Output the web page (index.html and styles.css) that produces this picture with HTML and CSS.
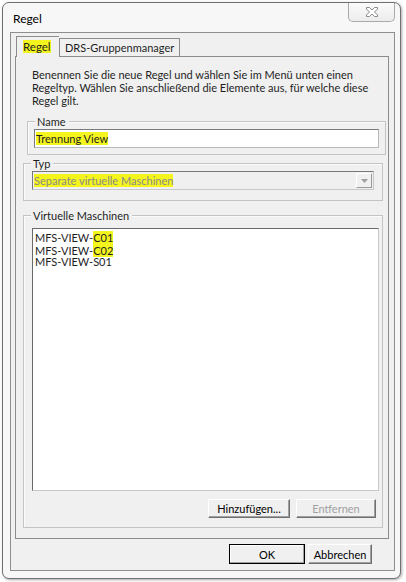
FILE: index.html
```html
<!DOCTYPE html>
<html>
<head>
<meta charset="utf-8">
<link rel="stylesheet" href="styles.css">
</head>
<body>
<div class="window">
  <div class="titlebar">
    <span class="title">Regel</span>
    <div class="close">
      <svg width="16" height="12" viewBox="0 0 16 12"><path d="M2.5 1.5h3l2.5 2.5 2.5-2.5h3v1.5l-3 3 3 3v1.5h-3l-2.5-2.5-2.5 2.5h-3v-1.5l3-3-3-3z" fill="#fff" stroke="#8a8a8a" stroke-width="1"/></svg>
    </div>
  </div>
  <div class="client">
    <div class="tabs">
      <div class="tab active"><span class="hl">Regel</span></div>
      <div class="tab">DRS-Gruppenmanager</div>
    </div>
    <div class="page">
      <p class="desc">Benennen Sie die neue Regel und wählen Sie im Menü unten einen Regeltyp. Wählen Sie anschließend die Elemente aus, für welche diese Regel gilt.</p>
      <div class="group g-name">
        <div class="legend">Name</div>
        <div class="textbox"><span class="hl">Trennung View</span></div>
      </div>
      <div class="group g-typ">
        <div class="legend">Typ</div>
        <div class="combo"><span class="hl">Separate virtuelle Maschinen</span><span class="drop"><svg width="7" height="4" viewBox="0 0 7 4"><path d="M0 0h7l-3.5 4z" fill="#a0a0a0"/></svg></span></div>
      </div>
      <div class="group g-vm">
        <div class="legend">Virtuelle Maschinen</div>
        <div class="list">
          <div class="item">MFS-VIEW-<span class="hl">C01</span></div>
          <div class="item">MFS-VIEW-<span class="hl">C02</span></div>
          <div class="item">MFS-VIEW-S01</div>
        </div>
        <div class="btnrow">
          <button class="btn add">Hinzufügen...</button>
          <button class="btn remove disabled">Entfernen</button>
        </div>
      </div>
    </div>
    <div class="footer">
      <button class="btn ok">OK</button>
      <button class="btn cancel">Abbrechen</button>
    </div>
  </div>
</div>
</body>
</html>
```

FILE: styles.css
```css
html, body {
  margin: 0;
  padding: 0;
  background: #ffffff;
}
body {
  width: 406px;
  height: 582px;
  font-family: "Lato", "Noto Sans", sans-serif;
  font-size: 11px;
  color: #1e1e1e;
}
.window {
  margin: 2px 0 0 2px;
  width: 399px;
  height: 577px;
  box-sizing: border-box;
  border: 1px solid #707070;
  border-radius: 7px;
  background: #f7f7f7;
  padding: 0 5px 7px 7px;
  display: flex;
  flex-direction: column;
  box-shadow: 1px 1px 3px rgba(0,0,0,0.35);
}
.titlebar {
  height: 29px;
  flex: none;
  display: flex;
  align-items: flex-start;
  justify-content: space-between;
}
.title {
  margin: 8px 0 0 3px;
  font-size: 12px;
  color: #000;
}
.close {
  width: 47px;
  height: 19px;
  box-sizing: border-box;
  border: 1px solid #a9a9a9;
  border-top: none;
  border-radius: 0 0 5px 5px;
  background: linear-gradient(#fbfbfb, #ececec);
  display: flex;
  align-items: center;
  justify-content: center;
}
.client {
  flex: 1;
  border: 1px solid #8e8e8e;
  background: #f0f0f0;
  display: flex;
  flex-direction: column;
  padding: 0 5px 0 4px;
}
.tabs {
  display: flex;
  align-items: flex-end;
  height: 23px;
  flex: none;
  padding-left: 1px;
  position: relative;
  z-index: 1;
}
.tab {
  height: 18px;
  box-sizing: border-box;
  padding: 0 5px 0 5px;
  border: 1px solid #8c8c8c;
  border-bottom: none;
  background: #f0f0f0;
  line-height: 17px;
}
.tab.active {
  height: 21px;
  width: 43px;
  padding: 2px 0 0 6px;
  margin-bottom: -1px;
  line-height: 15px;
  border-right: none;
  font-size: 11.5px;
}
.hl {
  background: #f5f51e;
  display: inline-block;
  line-height: 13px;
}
.page {
  flex: none;
  height: 483px;
  box-sizing: border-box;
  border: 1px solid #8c8c8c;
  background: #f0f0f0;
  padding: 11px 0 10px 0;
  display: flex;
  flex-direction: column;
}
.desc {
  margin: 0 0 14px 16px;
  line-height: 13px;
  width: 345px;
}
.group {
  border: 1px solid #c4c4c4;
  box-shadow: inset 1px 1px 0 #fbfbfb;
}
.legend {
  width: fit-content;
  margin-top: -7px;
  padding: 0 3px 0 2px;
  line-height: 13px;
  background: #f0f0f0;
}
.g-name {
  margin: 0 2px 0 11px;
  padding: 0 6px 6px 6px;
}
.g-name .legend {
  margin-left: 1px;
}
.g-name .textbox {
  margin-top: 1px;
}
.g-typ {
  margin: 8px 5px 0 7px;
  padding: 0 8px 10px 8px;
}
.g-typ .legend {
  margin-left: -1px;
}
.g-typ .combo {
  margin-top: 1px;
}
.g-vm {
  margin: 14px 5px 0 7px;
  padding: 0 3px 9px 8px;
  flex: 1;
  display: flex;
  flex-direction: column;
}
.g-vm .legend {
  margin-left: -1px;
}
.textbox {
  height: 19px;
  box-sizing: border-box;
  border: 1px solid #b8b8b8;
  border-top-color: #7a7a7a;
  border-left-color: #7a7a7a;
  background: #fff;
  padding: 2px 0 0 1px;
}
.combo {
  height: 19px;
  box-sizing: border-box;
  border: 1px solid #c8c8c8;
  border-left-color: #7a7a7a;
  border-top-color: #7a7a7a;
  background: #f0f0f0;
  padding-left: 1px;
  display: flex;
  align-items: center;
  justify-content: space-between;
  color: #8a8a8a;
}
.drop {
  width: 16px;
  height: 15px;
  margin: 1px;
  box-sizing: border-box;
  border: 1px solid #9a9a9a;
  border-top-color: #fff;
  border-left-color: #fff;
  background: #f0f0f0;
  display: flex;
  align-items: center;
  justify-content: center;
}
.list {
  flex: 1;
  margin-top: 6px;
  border: 1px solid #c8c8c8;
  border-top-color: #6a6a6a;
  border-left-color: #6a6a6a;
  background: #fff;
  padding: 2px 2px;
}
.item {
  line-height: 12px;
  height: 12.5px;
}
.btnrow {
  display: flex;
  justify-content: flex-end;
  gap: 6px;
  margin-top: 8px;
  padding-right: 3px;
}
.btn {
  font: inherit;
  color: #000;
  height: 19px;
  box-sizing: border-box;
  border: 1px solid #6f6f6f;
  border-top-color: #fff;
  border-left-color: #fff;
  background: #f0f0f0;
  padding: 0;
  box-shadow: inset -1px -1px 0 #a0a0a0;
}
.add { width: 82px; }
.remove { width: 80px; }
.btn.disabled {
  color: #a0a0a0;
}
.footer {
  display: flex;
  justify-content: flex-end;
  gap: 3px;
  padding: 5px 17px 0 0;
}
.ok {
  width: 76px;
  height: 20px;
  border: 1px solid #000;
  box-shadow: inset -1px -1px 0 #a0a0a0, inset 1px 1px 0 #fff;
}
.cancel {
  width: 64px;
  height: 20px;
}
```
